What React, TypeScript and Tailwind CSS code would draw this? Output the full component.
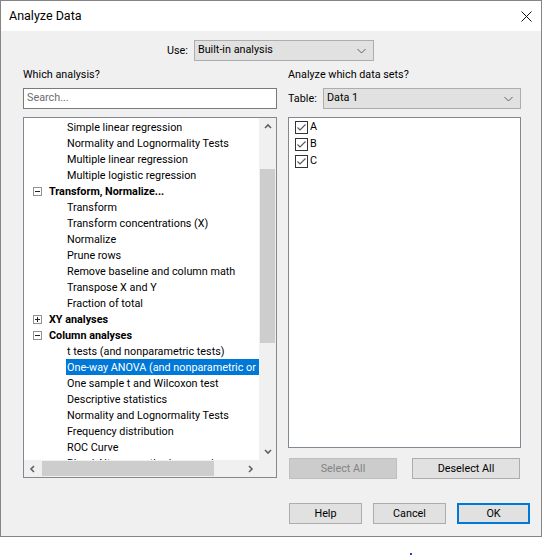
import React from 'react'

type Row = { label: string; kind: 'item' | 'head'; open?: boolean; selected?: boolean }

const rows: Row[] = [
  { label: 'Simple linear regression', kind: 'item' },
  { label: 'Normality and Lognormality Tests', kind: 'item' },
  { label: 'Multiple linear regression', kind: 'item' },
  { label: 'Multiple logistic regression', kind: 'item' },
  { label: 'Transform, Normalize...', kind: 'head', open: true },
  { label: 'Transform', kind: 'item' },
  { label: 'Transform concentrations (X)', kind: 'item' },
  { label: 'Normalize', kind: 'item' },
  { label: 'Prune rows', kind: 'item' },
  { label: 'Remove baseline and column math', kind: 'item' },
  { label: 'Transpose X and Y', kind: 'item' },
  { label: 'Fraction of total', kind: 'item' },
  { label: 'XY analyses', kind: 'head', open: false },
  { label: 'Column analyses', kind: 'head', open: true },
  { label: 't tests (and nonparametric tests)', kind: 'item' },
  { label: 'One-way ANOVA (and nonparametric or mixed)', kind: 'item', selected: true },
  { label: 'One sample t and Wilcoxon test', kind: 'item' },
  { label: 'Descriptive statistics', kind: 'item' },
  { label: 'Normality and Lognormality Tests', kind: 'item' },
  { label: 'Frequency distribution', kind: 'item' },
  { label: 'ROC Curve', kind: 'item' },
  { label: 'Bland-Altman method comparison', kind: 'item' },
  { label: 'Identify outliers', kind: 'item' },
]

const Chevron = ({ dir, className = '' }: { dir: 'up' | 'down' | 'left' | 'right'; className?: string }) => {
  const pts = {
    up: '1,5 4,2 7,5',
    down: '1,2 4,5 7,2',
    left: '5,1 2,4 5,7',
    right: '2,1 5,4 2,7',
  }[dir]
  return (
    <svg width="8" height="8" viewBox="0 0 8 8" className={className}>
      <polyline points={pts} fill="none" stroke="#606060" strokeWidth="1.6" />
    </svg>
  )
}

// thin "v" used on the combo boxes
const ComboArrow = () => (
  <svg width="9" height="6" viewBox="0 0 9 6">
    <polyline points="0.5,1 4.5,5 8.5,1" fill="none" stroke="#606060" strokeWidth="1" />
  </svg>
)

const Combo = ({ value, width }: { value: string; width: string }) => (
  <div className={`${width} h-[21px] border border-[#adadad] bg-[#e1e1e1] flex items-center pl-[3px] pr-[7px]`}>
    <span className="flex-1">{value}</span>
    <ComboArrow />
  </div>
)

const ExpandBox = ({ open }: { open?: boolean }) => (
  <span className="relative w-[9px] h-[9px] border border-[#919191] bg-white shrink-0">
    <span className="absolute left-[1px] top-[3px] w-[5px] h-px bg-[#222]" />
    {!open && <span className="absolute left-[3px] top-[1px] w-px h-[5px] bg-[#222]" />}
  </span>
)

function AnalysisTree() {
  return (
    <div className="w-[254px] h-[361px] mt-[8px] border border-[#828790] bg-white flex flex-col">
      <div className="flex flex-1 min-h-0">
        <div className="flex-1 min-w-0 overflow-hidden pt-[1px]">
          {rows.map((r, i) =>
            r.kind === 'head' ? (
              <div key={i} className="h-[16px] flex items-center pl-[9px] whitespace-nowrap">
                <ExpandBox open={r.open} />
                <span className="ml-[7px] font-bold pt-[2px]">{r.label}</span>
              </div>
            ) : (
              <div key={i} className="h-[16px] flex items-center pl-[42px] whitespace-nowrap">
                <span
                  className={
                    r.selected
                      ? 'h-[16px] flex items-center pt-[2px] pl-[1px] pr-[60px] bg-[#0078d7] text-white'
                      : 'pl-[1px] pt-[2px]'
                  }
                >
                  {r.label}
                </span>
              </div>
            )
          )}
        </div>
        {/* vertical scroll bar */}
        <div className="w-[17px] bg-[#f0f0f0] flex flex-col">
          <div className="h-[17px] flex items-center justify-center">
            <Chevron dir="up" />
          </div>
          <div className="flex-1">
            <div className="mt-[34px] mx-[1px] h-[174px] bg-[#cdcdcd]" />
          </div>
          <div className="h-[17px] flex items-center justify-center">
            <Chevron dir="down" />
          </div>
        </div>
      </div>
      {/* horizontal scroll bar */}
      <div className="h-[17px] flex bg-[#f0f0f0]">
        <div className="w-[17px] flex items-center justify-center">
          <Chevron dir="left" />
        </div>
        <div className="flex-1 py-[1px] pl-[1px]">
          <div className="w-[172px] h-full bg-[#cdcdcd]" />
        </div>
        <div className="w-[17px] flex items-center justify-center">
          <Chevron dir="right" />
        </div>
        <div className="w-[17px]" />
      </div>
    </div>
  )
}

const CheckBox = () => (
  <span className="w-[13px] h-[13px] border border-[#333] bg-white flex items-center justify-center shrink-0">
    <svg width="11" height="11" viewBox="0 0 11 11">
      <polyline points="1.5,5.5 4,8 9.5,2.5" fill="none" stroke="#555" strokeWidth="1.1" />
    </svg>
  </span>
)

const Btn = ({ label, kind = 'normal', width }: { label: string; kind?: 'normal' | 'disabled' | 'default'; width: string }) => {
  const look =
    kind === 'disabled'
      ? 'bg-[#cccccc] border border-[#bfbfbf] text-[#838383]'
      : kind === 'default'
        ? 'bg-[#e1e1e1] border-2 border-[#0078d7]'
        : 'bg-[#e1e1e1] border border-[#adadad]'
  return <div className={`${width} h-[21px] flex items-center justify-center pt-[1px] ${look}`}>{label}</div>
}

export default function App() {
  return (
    <div className="w-[542px] h-[556px] bg-white text-black font-[Roboto,sans-serif] text-[10.8px]">
      <div className="w-[542px] h-[537px] border border-[#858585] bg-[#f0f0f0] flex flex-col">
        {/* title bar */}
        <div className="h-[30px] bg-white flex items-center pl-[8px] pr-[9px]">
          <span className="flex-1 text-[12.5px]">Analyze Data</span>
          <svg width="11" height="11" viewBox="0 0 11 11">
            <path d="M0.5 0.5 L10.5 10.5 M10.5 0.5 L0.5 10.5" stroke="#111" strokeWidth="1" />
          </svg>
        </div>

        <div className="flex-1 flex flex-col pt-[9px] pl-[22px] pr-[11px] pb-[12px]">
          <div className="flex items-center pl-[144px]">
            <span className="mr-[6px] pt-[1px]">Use:</span>
            <Combo value="Built-in analysis" width="w-[180px]" />
          </div>

          <div className="flex gap-[11px] mt-[6px]">
            <div className="flex flex-col">
              <div className="h-[16px] flex items-center pt-[1px]">Which analysis?</div>
              <div className="mt-[5px] w-[254px] h-[21px] border border-[#7a7a7a] bg-white flex items-center pl-[3px] text-[#6d6d6d]">
                Search...
              </div>
              <AnalysisTree />
            </div>

            <div className="flex flex-col w-[233px]">
              <div className="h-[16px] flex items-center pt-[1px]">Analyze which data sets?</div>
              <div className="mt-[5px] flex items-center">
                <span className="flex-1 pt-[2px]">Table:</span>
                <Combo value="Data 1" width="w-[198px]" />
              </div>
              <div className="mt-[8px] h-[331px] border border-[#828790] bg-white pt-[1px] pl-[6px]">
                {['A', 'B', 'C'].map((s) => (
                  <div key={s} className="h-[17px] flex items-center gap-[2px]">
                    <CheckBox />
                    <span>{s}</span>
                  </div>
                ))}
              </div>
              <div className="mt-[10px] flex justify-between px-[1px]">
                <Btn label="Select All" kind="disabled" width="w-[108px]" />
                <Btn label="Deselect All" width="w-[108px]" />
              </div>
            </div>
          </div>

          <div className="mt-auto flex justify-end gap-[11px]">
            <Btn label="Help" width="w-[73px]" />
            <Btn label="Cancel" width="w-[73px]" />
            <Btn label="OK" kind="default" width="w-[73px]" />
          </div>
        </div>
      </div>
      <div className="pl-[410px] pt-[16px]">
        <span className="block w-[2px] h-[2px] bg-[#2040d0]" />
      </div>
    </div>
  )
}
